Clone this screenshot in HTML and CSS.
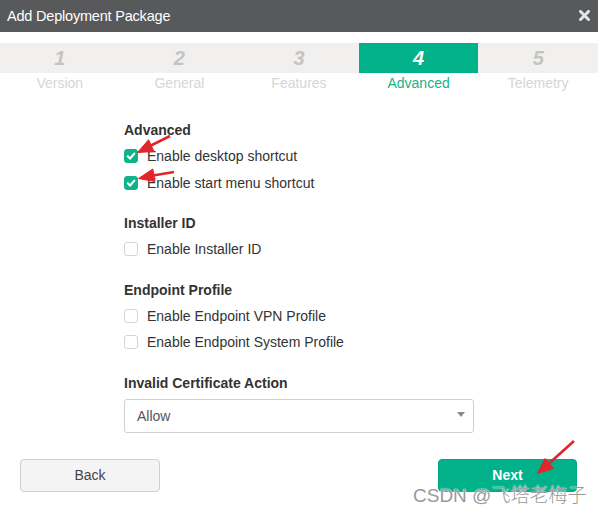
FILE: index.html
```html
<!DOCTYPE html>
<html>
<head>
<meta charset="utf-8">
<link rel="stylesheet" href="styles.css">
</head>
<body>
<div class="modal">
  <div class="header">
    <span class="title">Add Deployment Package</span>
    <svg class="close" width="11" height="11" viewBox="0 0 11 11"><path d="M1.5 1.5 L9.5 9.5 M9.5 1.5 L1.5 9.5" stroke="#e6e6e6" stroke-width="3" stroke-linecap="square"/></svg>
  </div>
  <div class="steps">
    <div class="step"><div class="num">1</div><div class="label">Version</div></div>
    <div class="step"><div class="num">2</div><div class="label">General</div></div>
    <div class="step"><div class="num">3</div><div class="label">Features</div></div>
    <div class="step active"><div class="num">4</div><div class="label">Advanced</div></div>
    <div class="step"><div class="num">5</div><div class="label">Telemetry</div></div>
  </div>
  <div class="content">
    <div class="section">
      <div class="heading">Advanced</div>
      <div class="row"><span class="cb checked"><svg width="14" height="14" viewBox="0 0 14 14"><path d="M3.8 7.3 L6 9.6 L10.3 4.6" fill="none" stroke="#fff" stroke-width="2.2" stroke-linecap="round" stroke-linejoin="round"/></svg></span>Enable desktop shortcut</div>
      <div class="row"><span class="cb checked"><svg width="14" height="14" viewBox="0 0 14 14"><path d="M3.8 7.3 L6 9.6 L10.3 4.6" fill="none" stroke="#fff" stroke-width="2.2" stroke-linecap="round" stroke-linejoin="round"/></svg></span>Enable start menu shortcut</div>
    </div>
    <div class="section">
      <div class="heading">Installer ID</div>
      <div class="row"><span class="cb"></span>Enable Installer ID</div>
    </div>
    <div class="section">
      <div class="heading">Endpoint Profile</div>
      <div class="row"><span class="cb"></span>Enable Endpoint VPN Profile</div>
      <div class="row"><span class="cb"></span>Enable Endpoint System Profile</div>
    </div>
    <div class="section">
      <div class="heading">Invalid Certificate Action</div>
      <div class="select"><span>Allow</span><span class="caret"></span></div>
    </div>
  </div>
  <div class="footer">
    <button class="btn back">Back</button>
    <button class="btn next">Next</button>
  </div>
  <svg class="annot" width="598" height="511" viewBox="0 0 598 511">
    <g fill="#e0262b" stroke="#e0262b">
      <line x1="170" y1="136" x2="151" y2="145.5" stroke-width="2.6"/>
      <polygon points="137.5,152.5 154,151.5 148.6,139.7" stroke-width="1"/>
      <line x1="174" y1="172" x2="153" y2="175.5" stroke-width="2.6"/>
      <polygon points="138.5,178.5 155,181.5 152.8,169" stroke-width="1"/>
      <line x1="574" y1="441" x2="549" y2="463.5" stroke-width="2.6"/>
      <polygon points="537.5,473.5 553.5,468.5 545,458.5" stroke-width="1"/>
    </g>
  </svg>
  <div class="watermark">CSDN @飞塔老梅子</div>
</div>
</body>
</html>
```
FILE: styles.css
```css
* { box-sizing: border-box; }
html, body { margin: 0; padding: 0; background: #fff; }
body { font-family: "Liberation Sans", Arial, sans-serif; width: 598px; height: 511px; overflow: hidden; }
.modal { position: relative; width: 598px; height: 511px; }
.header {
  height: 32px; background: #58595b; color: #fff;
  display: flex; align-items: center; justify-content: space-between;
  padding: 0 8px 0 7px;
}
.title { font-size: 14.5px; letter-spacing: -0.2px; }
.close { display: block; margin-top: -1px; }
.steps { margin-top: 11px; display: grid; grid-template-columns: repeat(5, 1fr); }
.step .num {
  height: 30px; background: #f1f0ee; color: #c4c4c4;
  font-size: 20px; font-weight: bold; font-style: italic;
  display: flex; align-items: center; justify-content: center;
}
.step .label { height: 19px; line-height: 19px; text-align: center; font-size: 14px; color: #d6d6d6; margin-top: 1px; }
.step.active .num { background: #00b18a; color: #fff; }
.step.active .label { color: #14b48b; }
.content { margin: 27px 0 0 124px; width: 350px; }
.section + .section { margin-top: 17px; }
.heading { height: 20px; line-height: 20px; font-size: 14px; font-weight: bold; color: #333; margin-bottom: 3px; }
.row { height: 26.5px; display: flex; align-items: center; font-size: 14px; color: #333; }
.cb {
  width: 14px; height: 14px; border: 1px solid #d4d4d4; border-radius: 3px;
  margin-right: 9px; background: #fff; display: inline-flex; flex: none;
}
.cb.checked { background: #0fb38a; border-color: #0fb38a; }
.cb.checked svg { display: block; margin: -1px; }
.select {
  margin-top: 6px; height: 34px; border: 1px solid #cfcfcf; border-radius: 3px;
  display: flex; align-items: center; justify-content: space-between;
  padding: 0 8px 0 12px; font-size: 14px; color: #555;
}
.caret { width: 0; height: 0; border-left: 4px solid transparent; border-right: 4px solid transparent; border-top: 5px solid #8a8a8a; margin-top: -2px; }
.footer { margin-top: 26px; display: flex; justify-content: space-between; padding: 0 21px 0 20px; }
.btn {
  width: 140px; height: 33px; border-radius: 4px; font-family: "Liberation Sans", Arial, sans-serif;
  font-size: 14px; cursor: pointer;
}
.back { background: #f4f4f4; border: 1px solid #cfcfcf; color: #444; }
.next { width: 139px; background: #00b18a; border: 1px solid #00a985; color: #fff; font-weight: bold; }
.annot { position: absolute; left: 0; top: 0; pointer-events: none; }
.watermark {
  position: absolute; left: 413px; top: 480px;
  font-family: "Liberation Sans", "Noto Sans CJK SC", sans-serif; font-size: 19px; font-weight: 300;
  color: #999; text-shadow: 0 0 2px #fff, 0 0 1px #fff; white-space: nowrap;
}
```
